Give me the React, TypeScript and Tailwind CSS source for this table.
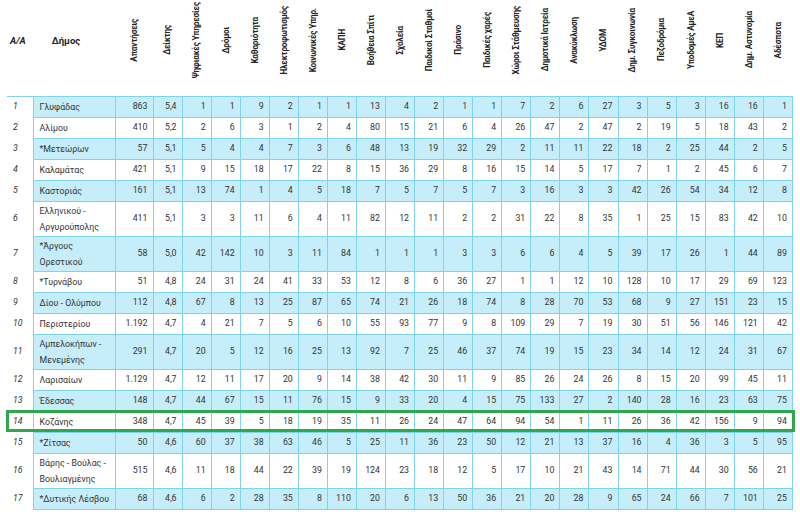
import React from "react";

const heads = [
  "Απαντήσεις",
  "Δείκτης",
  "Ψηφιακές Υπηρεσίες",
  "Δρόμοι",
  "Καθαριότητα",
  "Ηλεκτροφωτισμός",
  "Κοινωνικές Υπηρ.",
  "ΚΑΠΗ",
  "Βοήθεια Σπίτι",
  "Σχολεία",
  "Παιδικοί Σταθμοί",
  "Πράσινο",
  "Παιδικές χαρές",
  "Χώροι Στάθμευσης",
  "Δημοτικά Ιατρεία",
  "Ανακύκλωση",
  "ΥΔΟΜ",
  "Δημ. Συγκοινωνία",
  "Πεζοδρόμια",
  "Υποδομές ΑμεΑ",
  "ΚΕΠ",
  "Δημ. Αστυνομία",
  "Αδέσποτα",
];

type Row = { name: string[]; v: string };

const rows: Row[] = [
  { name: ["Γλυφάδας"], v: "863 5,4 1 1 9 2 1 1 13 4 2 1 1 7 2 6 27 3 5 3 16 16 1" },
  { name: ["Αλίμου"], v: "410 5,2 2 6 3 1 2 4 80 15 21 6 4 26 47 2 47 2 19 5 18 43 2" },
  { name: ["*Μετεώρων"], v: "57 5,1 5 4 4 7 3 6 48 13 19 32 29 2 11 11 22 18 2 25 44 2 5" },
  { name: ["Καλαμάτας"], v: "421 5,1 9 15 18 17 22 8 15 36 29 8 16 15 14 5 17 7 1 2 45 6 7" },
  { name: ["Καστοριάς"], v: "161 5,1 13 74 1 4 5 18 7 5 7 5 7 3 16 3 3 42 26 54 34 12 8" },
  { name: ["Ελληνικού -", "Αργυρούπολης"], v: "411 5,1 3 3 11 6 4 11 82 12 11 2 2 31 22 8 35 1 25 15 83 42 10" },
  { name: ["*Άργους", "Ορεστικού"], v: "58 5,0 42 142 10 3 11 84 1 1 1 3 3 6 6 4 5 39 17 26 1 44 89" },
  { name: ["*Τυρνάβου"], v: "51 4,8 24 31 24 41 33 53 12 8 6 36 27 1 1 12 10 128 10 17 29 69 123" },
  { name: ["Δίου - Ολύμπου"], v: "112 4,8 67 8 13 25 87 65 74 21 26 18 74 8 28 70 53 68 9 27 151 23 15" },
  { name: ["Περιστερίου"], v: "1.192 4,7 4 21 7 5 6 10 55 93 77 9 8 109 29 7 19 30 51 56 146 121 42" },
  { name: ["Αμπελοκήπων -", "Μενεμένης"], v: "291 4,7 20 5 12 16 25 13 92 7 25 46 37 74 19 15 23 34 14 12 24 31 67" },
  { name: ["Λαρισαίων"], v: "1.129 4,7 12 11 17 20 9 14 38 42 30 11 9 85 26 24 26 8 15 20 99 45 11" },
  { name: ["Έδεσσας"], v: "148 4,7 44 67 15 11 76 15 9 33 20 4 15 75 133 27 2 140 28 16 23 63 75" },
  { name: ["Κοζάνης"], v: "348 4,7 45 39 5 18 19 35 11 26 24 47 64 94 54 1 11 26 36 42 156 9 94" },
  { name: ["*Ζίτσας"], v: "50 4,6 60 37 38 63 46 5 25 11 36 23 50 12 21 13 37 16 4 36 3 5 95" },
  { name: ["Βάρης - Βούλας -", "Βουλιαγμένης"], v: "515 4,6 11 18 44 22 39 19 124 23 18 12 5 17 10 21 43 14 71 44 30 56 21" },
  { name: ["*Δυτικής Λέσβου"], v: "68 4,6 6 2 28 35 8 110 20 6 13 50 36 21 20 28 9 65 24 66 7 101 25" },
];

export default function App() {
  return (
    <div className="w-[800px] h-[517px] overflow-hidden bg-white font-['Roboto',sans-serif] text-[#333]">
      <div className="relative ml-[7px] w-[786px]">
        <table className="w-full table-fixed border-collapse">
          <colgroup>
            <col className="w-[26px]" />
            <col className="w-[82px]" />
            <col className="w-[38px]" />
            {heads.slice(1).map((h) => (
              <col key={h} />
            ))}
          </colgroup>
          <thead className="text-[#222]">
            <tr className="h-[96px]">
              <th className="p-0 align-top text-[9.5px] font-bold italic">
                <div className="flex h-[82px] items-center pl-[3px]">A/A</div>
              </th>
              <th className="p-0 align-top text-[9.5px] font-bold">
                <div className="flex h-[82px] items-center justify-center pr-[16px]">Δήμος</div>
              </th>
              {heads.map((h) => (
                <th key={h} className="p-0 align-top text-[8.2px] font-bold">
                  <div className="flex h-[80px] items-center justify-center">
                    <span className="rotate-180 whitespace-nowrap leading-none tracking-[-0.2px] [writing-mode:vertical-rl]">
                      {h}
                    </span>
                  </div>
                </th>
              ))}
            </tr>
          </thead>
          <tbody className="text-[8.8px]">
            {rows.map((r, i) => {
              const shade = i % 2 === 0 ? "bg-[#c6eefa]" : "bg-white";
              const tall = r.name.length > 1;
              return (
                <tr key={i} className={tall ? "h-[35px]" : "h-[21px]"}>
                  <td
                    className={`pl-[6px] italic ${
                      i === 0 ? "border-t border-[#7fd4ea]" : ""
                    }`}
                  >
                    {i + 1}
                  </td>
                  <td
                    className={`border border-[#7fd4ea] pl-[6px] leading-[16px] whitespace-nowrap ${shade}`}
                  >
                    {r.name.map((l) => (
                      <div key={l}>{l}</div>
                    ))}
                  </td>
                  {r.v.split(" ").map((n, j) => (
                    <td
                      key={j}
                      className={`border border-[#7fd4ea] pr-[5px] text-right ${shade}`}
                    >
                      {n}
                    </td>
                  ))}
                </tr>
              );
            })}
          </tbody>
        </table>
        <div className="pointer-events-none absolute left-[-1px] top-[410px] h-[22px] w-[789px] border-[3px] border-[#30a64f]" />
      </div>
    </div>
  );
}
